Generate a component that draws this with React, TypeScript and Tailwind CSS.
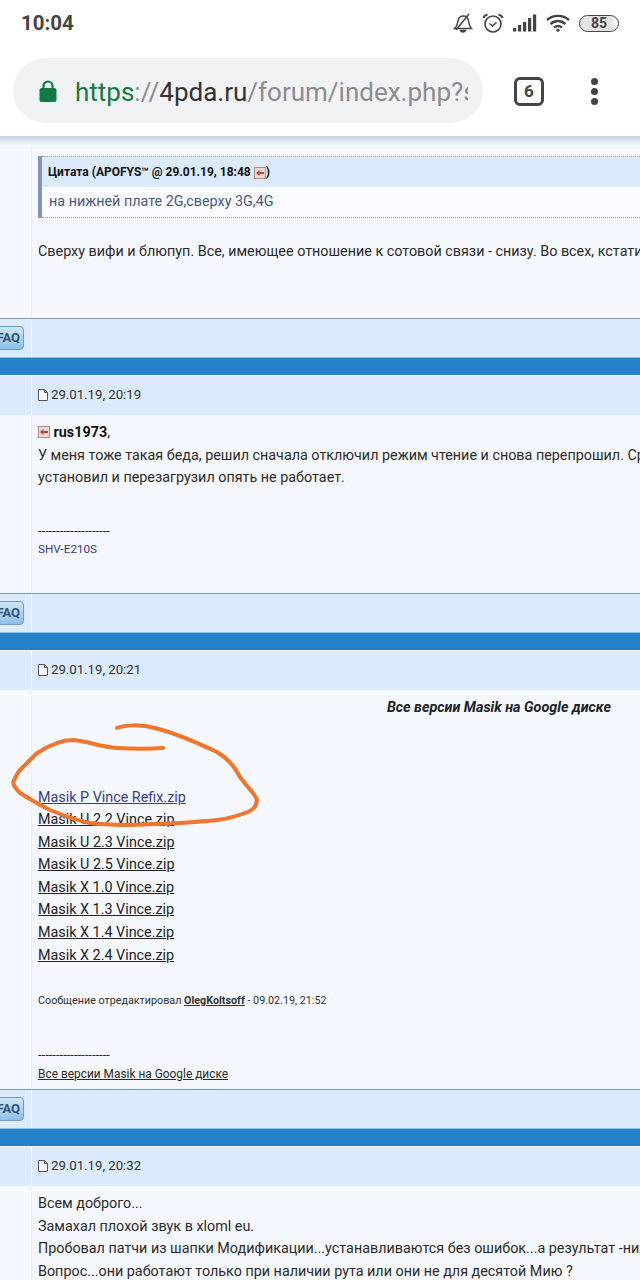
import React from 'react';

const BackIcon = () => (
  <svg width="12" height="12" viewBox="0 0 12 12" className="inline-block align-[-1px]">
    <rect x="0.5" y="0.5" width="11" height="11" fill="#f0d5d0" stroke="#b98a86" />
    <path d="M2 6 L5.5 3 V5 H10 V7 H5.5 V9 Z" fill="#b04a44" />
  </svg>
);

const PageIcon = () => (
  <svg width="10" height="12" viewBox="0 0 10 12" className="mr-[3px] shrink-0">
    <path d="M.5 .5 H6.5 L9.5 3.5 V11.5 H.5 Z M6.5 .5 V3.5 H9.5" fill="#fff" stroke="#555" strokeWidth="1" />
  </svg>
);

const FaqRow = () => (
  <div className="flex h-[39px] shrink-0 border-t border-t-[#7f97b5] bg-[#dbeafc]">
    <div className="relative w-[32px] shrink-0 border-r border-r-[#f3f8fe] overflow-hidden">
      <div className="absolute right-[7px] top-[7px] flex h-[24px] w-[50px] items-center justify-end rounded-[4px] border border-[#6c9cc8] bg-gradient-to-b from-[#cfe6fa] to-[#8dbfe8] pr-[3px] text-[13px] font-bold text-[#2f5573]">
        FAQ
      </div>
    </div>
    <div className="flex-1" />
  </div>
);

const BlueBand = () => <div className="h-[18px] shrink-0 border-t border-t-[#8cc0e6] bg-[#2580ca]" />;

const DateRow = ({ date }: { date: string }) => (
  <div className="mt-[1px] flex h-[39px] shrink-0 bg-[#dbeafc]">
    <div className="w-[32px] shrink-0 border-r border-r-[#f3f8fe]" />
    <div className="flex items-center pb-[1px] pl-[6px] text-[13.2px] text-[#333]">
      <PageIcon />
      {date}
    </div>
  </div>
);

const PostBody = ({ height, children }: { height: string; children: React.ReactNode }) => (
  <div className={`flex shrink-0 bg-[#f5f8fe] ${height}`}>
    <div className="w-[32px] shrink-0 border-r border-r-[#e9eff8]" />
    <div className="min-w-0 flex-1 overflow-hidden whitespace-nowrap pl-[6px] text-[14.35px] leading-[22.5px] text-[#2b2b2b]">
      {children}
    </div>
  </div>
);

const zipLinks = [
  'Masik U 2.2 Vince.zip',
  'Masik U 2.3 Vince.zip',
  'Masik U 2.5 Vince.zip',
  'Masik X 1.0 Vince.zip',
  'Masik X 1.3 Vince.zip',
  'Masik X 1.4 Vince.zip',
  'Masik X 2.4 Vince.zip',
];

export default function App() {
  return (
    <div className="relative flex h-[1280px] w-[640px] flex-col overflow-hidden bg-[#f5f8fe] font-['Roboto',sans-serif]">
      {/* status bar */}
      <div className="flex h-[46px] shrink-0 items-center justify-between bg-white pl-[21px] pr-[21px]">
        <span className="text-[20.5px] font-bold text-[#444]">10:04</span>
        <div className="flex items-center gap-[9px]">
          <svg width="20" height="20" viewBox="0 0 20 20" fill="none" stroke="#444" strokeWidth="1.5">
            <path d="M1.5 15.5 C4 13.5 4.5 11 5 8 C5.5 4.5 8 3 10.5 3 C13.5 3 15 5.5 15.5 8 C16 11 16.5 13.5 18.5 15.5 Z" />
            <path d="M7.5 17.5 C8.5 19.5 11.5 19.5 12.5 17.5 Z" fill="#444" />
            <path d="M3 17 L16 1" />
          </svg>
          <svg width="22" height="20" viewBox="0 0 22 20" fill="none" stroke="#444" strokeWidth="1.6">
            <circle cx="11" cy="11" r="8" />
            <path d="M7.5 10.5 L10.5 13 L14.5 9.5" />
            <path d="M1.5 5 C2 3 3.5 2 5.5 1.5 M20.5 5 C20 3 18.5 2 16.5 1.5" strokeWidth="2" />
          </svg>
          <svg width="24" height="18" viewBox="0 0 24 18" fill="#444">
            <rect x="0" y="14" width="3.2" height="3.5" />
            <rect x="5" y="11" width="3.2" height="6.5" />
            <rect x="10" y="8" width="3.2" height="9.5" />
            <rect x="15" y="4" width="3.2" height="13.5" />
            <rect x="20" y="0.5" width="3.2" height="17" />
          </svg>
          <svg width="24" height="18" viewBox="0 0 24 18" fill="none" stroke="#444" strokeWidth="2.4">
            <path d="M1 6 C7 0.5 17 0.5 23 6" />
            <path d="M4.5 10 C9 6 15 6 19.5 10" />
            <path d="M8 13.5 C10.5 11.5 13.5 11.5 16 13.5" />
            <circle cx="12" cy="16.2" r="1.6" fill="#444" stroke="none" />
          </svg>
          <div className="flex h-[17px] w-[40px] items-center justify-center rounded-[9px] border-[1.5px] border-[#444] bg-[linear-gradient(90deg,#e4e4e4_88%,#fff_88%)] text-[14px] font-bold leading-none text-[#444]">
            85
          </div>
        </div>
      </div>

      {/* address bar */}
      <div className="flex h-[90px] shrink-0 items-start bg-white pl-[13px] pt-[12px]">
        <div className="flex h-[65px] w-[470px] items-center overflow-hidden rounded-full bg-[#f1f2f4] pl-[26px]">
          <svg width="18" height="24" viewBox="0 0 18 24" fill="#137a43" className="mr-[18px] shrink-0">
            <path d="M4.5 10 V7 a4.5 4.5 0 0 1 9 0 V10" fill="none" stroke="#137a43" strokeWidth="2.2" />
            <rect x="0.5" y="9" width="17" height="14" rx="2" />
          </svg>
          <div className="w-[393px] shrink-0 overflow-hidden whitespace-nowrap pt-[3px] text-[26px] text-[#8a8c90]">
            <span className="text-[#137a43]">https</span>://<span className="text-[#333]">4pda.ru</span>/forum/index.php?showtopic
          </div>
        </div>
        <div className="ml-[31px] mt-[19px] flex h-[29px] w-[30px] items-center justify-center rounded-[6px] border-[3px] border-[#444] text-[17px] font-bold text-[#444]">
          6
        </div>
        <div className="ml-[47px] mt-[20px] flex flex-col gap-[3px]">
          <div className="h-[7px] w-[7px] rounded-full bg-[#444]" />
          <div className="h-[7px] w-[7px] rounded-full bg-[#444]" />
          <div className="h-[7px] w-[7px] rounded-full bg-[#444]" />
        </div>
      </div>
      <div className="h-[9px] shrink-0 bg-gradient-to-b from-[#c5d3e3] to-[#f3f6fb]" />

      {/* post 1 */}
      <PostBody height="h-[173px]">
        <div className="mt-[11px] flex h-[62px]">
          <div className="w-[4px] shrink-0 bg-[#8494b4]" />
          <div className="flex flex-1 flex-col border-y border-dotted border-y-[#9aa3b5]">
            <div className="flex h-[30px] items-center bg-[#dbeafc] pl-[6px] pt-[1px] text-[12px] font-bold text-[#111]">
              Цитата (APOFYS™ @ 29.01.19, 18:48&nbsp;<BackIcon />)
            </div>
            <div className="flex flex-1 items-center bg-[#f9fbff] pl-[7px] pt-[1px] text-[#4a5a80]">
              на нижней плате 2G,сверху 3G,4G
            </div>
          </div>
        </div>
        <div className="mt-[23px]">Сверху вифи и блюпуп. Все, имеющее отношение к сотовой связи - снизу. Во всех, кстати, моделях</div>
      </PostBody>
      <FaqRow />
      <BlueBand />

      {/* post 2 */}
      <DateRow date="29.01.19, 20:19" />
      <PostBody height="h-[178px]">
        <div className="mt-[7px]">
          <BackIcon /> <b className="text-[#111]">rus1973</b>,
        </div>
        <div>У меня тоже такая беда, решил сначала отключил режим чтение и снова перепрошил. Сразу</div>
        <div>установил и перезагрузил опять не работает.</div>
        <div className="mt-[32px] text-[13px] leading-[18px]">--------------------</div>
        <div className="text-[11.7px] leading-[18px] text-[#36408a]">SHV-E210S</div>
      </PostBody>
      <FaqRow />
      <BlueBand />

      {/* post 3 */}
      <DateRow date="29.01.19, 20:21" />
      <PostBody height="h-[399px]">
        <div className="mt-[7px] pr-[29px] text-right font-bold italic text-[#222]">Все версии Masik на Google диске</div>
        <div className="mt-[67px] leading-[22.6px] text-[#36408a] underline">Masik P Vince Refix.zip</div>
        {zipLinks.map((name) => (
          <div key={name} className="leading-[22.6px] text-[#222] underline">{name}</div>
        ))}
        <div className="mt-[25px] text-[10.75px] leading-[18px] text-[#333]">
          Сообщение отредактировал <b className="underline">OlegKoltsoff</b> - 09.02.19, 21:52
        </div>
        <div className="mt-[36px] text-[13px] leading-[18px]">--------------------</div>
        <div className="mt-[1px] text-[11.9px] leading-[18px] underline">Все версии Masik на Google диске</div>
      </PostBody>
      <FaqRow />
      <BlueBand />

      {/* post 4 */}
      <DateRow date="29.01.19, 20:32" />
      <PostBody height="h-[94px]">
        <div className="mt-[7px]">Всем доброго...</div>
        <div>Замахал плохой звук в xloml eu.</div>
        <div>Пробовал патчи из шапки Модификации...устанавливаются без ошибок...а результат -ниже нуля</div>
        <div>Вопрос...они работают только при наличии рута или они не для десятой Мию ?</div>
      </PostBody>

      {/* hand drawn circle */}
      <svg width="280" height="120" viewBox="0 0 280 120" fill="none" className="absolute left-0 top-[720px]" stroke="#f0752d" strokeWidth="4" strokeLinecap="round" strokeLinejoin="round">
        <path d="M117 8 C125 5 140 4 155 8 C175 13 200 24 217 32 C230 40 235 48 240 57 C248 68 256 75 257 80 C256 88 252 90 248 92 C235 97 225 99 217 100 C190 103 160 104 133 105 C118 105 105 105 90 103 C75 100 62 95 50 90 C40 85 28 78 20 73 C15 68 12 64 14 60 C16 56 18 52 20 50 C26 44 32 38 37 33 C48 26 60 20 73 20 C88 21 100 27 117 28 C135 29 150 29 163 28" />
      </svg>
    </div>
  );
}
